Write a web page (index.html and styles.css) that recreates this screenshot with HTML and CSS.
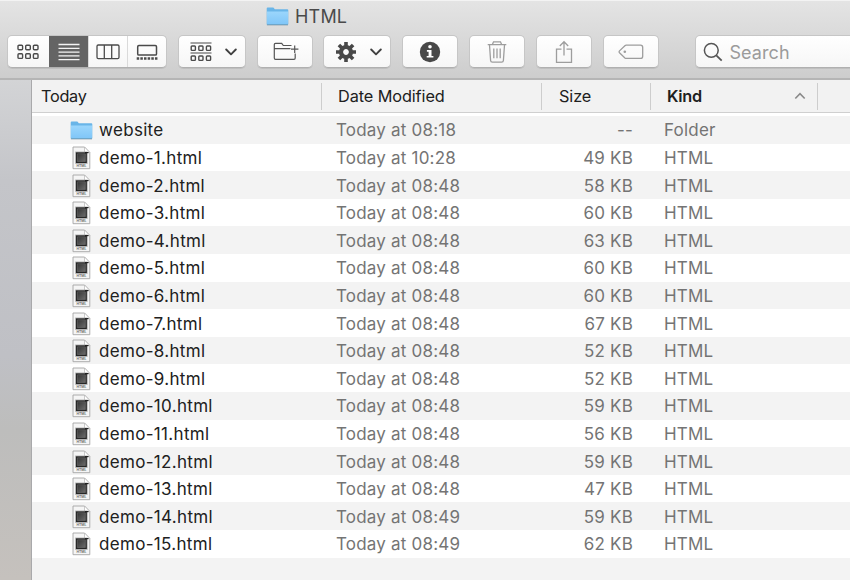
FILE: index.html
```html
<!DOCTYPE html>
<html lang="en">
<head>
<meta charset="utf-8">
<title>HTML</title>
<link rel="stylesheet" href="styles.css">
</head>
<body>
<svg class="defs" width="0" height="0" aria-hidden="true">
  <defs>
    <linearGradient id="blue" x1="0" y1="0" x2="0" y2="1"><stop offset="0" stop-color="#9bd6fc"/><stop offset="1" stop-color="#80c6f8"/></linearGradient>
    <linearGradient id="chip" x1="0" y1="0" x2="1" y2="1"><stop offset="0" stop-color="#343434"/><stop offset="1" stop-color="#6b6b6b"/></linearGradient>
    <symbol id="folder" viewBox="0 0 23 19">
      <path d="M.7 17V1.6Q.7.6 1.7.6H7q.8 0 1.2.8l.7.9h12.4q1 0 1 1V17q0 .9-1 .9H1.7Q.7 17.900.7 17Z" fill="#69b5e8"/>
      <path d="M1 4.500H22V16.300q0 .8-.8.8H1.800q-.8 0-.8-.8Z" fill="url(#blue)"/>
      <path d="M.9 17.900H22" stroke="#7795a8" stroke-width=".8"/>
    </symbol>
    <symbol id="file" viewBox="0 0 19 24">
      <path d="M1 1H12.500L17.800 6.500V22.700H1Z" fill="#f5f5f5" stroke="#a5a5a5" stroke-width=".9"/>
      <path d="M12.500 1V6.500H17.800Z" fill="#fff" stroke="#b5b5b5" stroke-width=".7"/>
      <path d="M3.200 5.600H15.600V17.800H3.200Z" fill="#a4a4a4"/>
      <path d="M4 6.400H14.800V17H4Z" fill="#242424"/>
      <path d="M5.400 7.800H13.400V15.600H5.400Z" fill="url(#chip)" stroke="#777" stroke-width=".5"/>
      <path d="M13 6H16.500V7.200H13Z" fill="#222"/>
      <text x="9.500" y="21.300" text-anchor="middle" class="tiny">HTML</text>
    </symbol>
    <symbol id="down" viewBox="0 0 12 8"><path d="M1.200 1.500 6 6.300 10.800 1.500" fill="none" stroke="#404040" stroke-width="1.900" stroke-linecap="round" stroke-linejoin="round"/></symbol>
  </defs>
</svg>
<div class="window">
  <header class="chrome">
    <div class="title"><svg width="23" height="19"><use href="#folder"/></svg><span>HTML</span></div>
    <div class="toolbar">
      <div class="group views">
        <button class="view"><svg width="22" height="16" viewBox="0 0 22 16" fill="none" stroke="#4a4a4a" stroke-width="1.400"><rect x="1" y="1.200" width="4.600" height="4.600" rx="1"/><rect x="8.700" y="1.200" width="4.600" height="4.600" rx="1"/><rect x="16.400" y="1.200" width="4.600" height="4.600" rx="1"/><rect x="1" y="9.800" width="4.600" height="4.600" rx="1"/><rect x="8.700" y="9.800" width="4.600" height="4.600" rx="1"/><rect x="16.400" y="9.800" width="4.600" height="4.600" rx="1"/></svg></button>
        <button class="view active"><svg width="22" height="18" viewBox="0 0 22 18" stroke="#f4f4f4" stroke-width="1.300"><path d="M.5 1.500H21.500M.5 5.300H21.500M.5 9.100H21.500M.5 12.900H21.500M.5 16.700H21.500"/></svg></button>
        <button class="view"><svg width="24" height="16" viewBox="0 0 24 16" fill="none" stroke="#4a4a4a" stroke-width="1.300"><rect x="1" y="1" width="22" height="13.600" rx="1.300"/><path d="M8.300 1V14.600M15.700 1V14.600"/></svg></button>
        <button class="view"><svg width="22" height="17" viewBox="0 0 22 17" fill="none" stroke="#4a4a4a"><rect x="1.700" y="1.500" width="18.800" height="9.600" rx="1.200" stroke-width="1.500"/><path d="M.7 14.400H21.500" stroke-width="2.500" stroke-dasharray="2.500 1.150"/></svg></button>
      </div>
      <button class="group arrange"><svg width="22" height="20" viewBox="0 0 22 20" fill="none" stroke="#4a4a4a" stroke-width="1.400"><path d="M.5 1H21.500M.5 11H21.500" stroke-width="1.100"/><rect x="1.200" y="4" width="4.200" height="4.400" rx=".8"/><rect x="8.800" y="4" width="4.200" height="4.400" rx=".8"/><rect x="16.400" y="4" width="4.200" height="4.400" rx=".8"/><rect x="1.200" y="14" width="4.200" height="4.400" rx=".8"/><rect x="8.800" y="14" width="4.200" height="4.400" rx=".8"/><rect x="16.400" y="14" width="4.200" height="4.400" rx=".8"/></svg><svg class="down" width="12" height="8"><use href="#down"/></svg></button>
      <button class="group newfolder"><svg width="26" height="20" viewBox="0 0 26 20" fill="none" stroke="#555" stroke-width="1.200"><path d="M18.500 3.500H10.300L8.700 1.300H2.500Q1.300 1.300 1.300 2.500V16Q1.300 17.300 2.500 17.300H21Q22.200 17.300 22.200 16V11.500M1.300 6.700H17.500M21.700 3.500V10.900M18 7.200H25.400"/></svg></button>
      <button class="group action"><svg width="22" height="22" viewBox="-11 -11 22 22"><g stroke="#484848" stroke-width="3.600"><path d="M0-10V-5M0 5V10M-10 0H-5M5 0H10M-7.100-7.100-4-4M4 4 7.100 7.100M-7.100 7.100-4 4M4-4 7.100-7.100"/></g><circle r="5" fill="none" stroke="#484848" stroke-width="4.200"/></svg><svg class="down" width="12" height="8"><use href="#down"/></svg></button>
      <button class="group info"><svg width="22" height="22" viewBox="0 0 22 22"><circle cx="11" cy="11" r="10.200" fill="#484848"/><circle cx="11" cy="5.800" r="1.800" fill="#fff"/><path d="M7.900 9H12.500V14.900H14.400V16.600H7.700V14.900H9.600V10.700H7.900Z" fill="#fff"/></svg></button>
      <button class="group trash"><svg width="20" height="24" viewBox="0 0 20 24" fill="none" stroke="#9d9d9d" stroke-width="1.300"><path d="M.7 4.600H19.300M5.500 4.200 6.500 1.800H13.500L14.500 4.200M2.500 5 3.600 20.500Q3.700 22.200 5.400 22.200H14.600Q16.300 22.200 16.400 20.500L17.500 5M6.800 8.500V18.300M10 8.500V18.300M13.200 8.500V18.300"/></svg></button>
      <button class="group share"><svg width="18" height="24" viewBox="0 0 18 24" fill="none" stroke="#9d9d9d" stroke-width="1.300"><path d="M6.500 9.200H1.500V22.300H16.500V9.200H11.500M9 15.500V2M4.800 6 9 1.700 13.200 6"/></svg></button>
      <button class="group tag"><svg width="26" height="16" viewBox="0 0 26 16" fill="none" stroke="#9d9d9d" stroke-width="1.300"><path d="M8.200 1.200H22.500Q24.700 1.200 24.700 3.400V12.200Q24.700 14.400 22.500 14.400H8.200Q7.500 14.400 6.900 13.900L1.500 8.700Q.7 7.800 1.500 6.900L6.900 1.700Q7.500 1.200 8.200 1.200Z"/><circle cx="6.800" cy="7.800" r="1.300" fill="#9d9d9d" stroke="none"/></svg></button>
      <div class="group search"><svg width="20" height="20" viewBox="0 0 20 20" fill="none" stroke="#555" stroke-width="1.500"><circle cx="8.300" cy="8.300" r="6.900"/><path d="M13.300 13.300 18.700 18.700" stroke-width="1.800"/></svg><span>Search</span></div>
    </div>
  </header>
  <div class="body">
    <aside class="sidebar"></aside>
    <main class="list">
      <div class="row head"><span class="c1">Today</span><span class="c2">Date Modified</span><span class="c3">Size</span><span class="c4">Kind<svg width="12" height="8" viewBox="0 0 12 8"><path d="M1.300 6.500 6 1.700 10.700 6.500" fill="none" stroke="#8a8a8a" stroke-width="1.600"/></svg></span><span class="c5"></span></div>
      <div class="rows">
        <div class="row"><span class="name"><svg class="dir" width="23" height="19"><use href="#folder"/></svg>website</span><span class="date">Today at 08:18</span><span class="size none">--</span><span class="kind folder">Folder</span></div>
        <div class="row"><span class="name"><svg width="19" height="24"><use href="#file"/></svg>demo-1.html</span><span class="date">Today at 10:28</span><span class="size">49 KB</span><span class="kind">HTML</span></div>
        <div class="row"><span class="name"><svg width="19" height="24"><use href="#file"/></svg>demo-2.html</span><span class="date">Today at 08:48</span><span class="size">58 KB</span><span class="kind">HTML</span></div>
        <div class="row"><span class="name"><svg width="19" height="24"><use href="#file"/></svg>demo-3.html</span><span class="date">Today at 08:48</span><span class="size">60 KB</span><span class="kind">HTML</span></div>
        <div class="row"><span class="name"><svg width="19" height="24"><use href="#file"/></svg>demo-4.html</span><span class="date">Today at 08:48</span><span class="size">63 KB</span><span class="kind">HTML</span></div>
        <div class="row"><span class="name"><svg width="19" height="24"><use href="#file"/></svg>demo-5.html</span><span class="date">Today at 08:48</span><span class="size">60 KB</span><span class="kind">HTML</span></div>
        <div class="row"><span class="name"><svg width="19" height="24"><use href="#file"/></svg>demo-6.html</span><span class="date">Today at 08:48</span><span class="size">60 KB</span><span class="kind">HTML</span></div>
        <div class="row"><span class="name"><svg width="19" height="24"><use href="#file"/></svg>demo-7.html</span><span class="date">Today at 08:48</span><span class="size">67 KB</span><span class="kind">HTML</span></div>
        <div class="row"><span class="name"><svg width="19" height="24"><use href="#file"/></svg>demo-8.html</span><span class="date">Today at 08:48</span><span class="size">52 KB</span><span class="kind">HTML</span></div>
        <div class="row"><span class="name"><svg width="19" height="24"><use href="#file"/></svg>demo-9.html</span><span class="date">Today at 08:48</span><span class="size">52 KB</span><span class="kind">HTML</span></div>
        <div class="row"><span class="name"><svg width="19" height="24"><use href="#file"/></svg>demo-10.html</span><span class="date">Today at 08:48</span><span class="size">59 KB</span><span class="kind">HTML</span></div>
        <div class="row"><span class="name"><svg width="19" height="24"><use href="#file"/></svg>demo-11.html</span><span class="date">Today at 08:48</span><span class="size">56 KB</span><span class="kind">HTML</span></div>
        <div class="row"><span class="name"><svg width="19" height="24"><use href="#file"/></svg>demo-12.html</span><span class="date">Today at 08:48</span><span class="size">59 KB</span><span class="kind">HTML</span></div>
        <div class="row"><span class="name"><svg width="19" height="24"><use href="#file"/></svg>demo-13.html</span><span class="date">Today at 08:48</span><span class="size">47 KB</span><span class="kind">HTML</span></div>
        <div class="row"><span class="name"><svg width="19" height="24"><use href="#file"/></svg>demo-14.html</span><span class="date">Today at 08:49</span><span class="size">59 KB</span><span class="kind">HTML</span></div>
        <div class="row"><span class="name"><svg width="19" height="24"><use href="#file"/></svg>demo-15.html</span><span class="date">Today at 08:49</span><span class="size">62 KB</span><span class="kind">HTML</span></div>
        <div class="row"></div>
      </div>
    </main>
  </div>
</div>
</body>
</html>
```
FILE: styles.css
```css
* { box-sizing: border-box; }
body { margin: 0; background: #fff; font-family: Inter, "Liberation Sans", sans-serif; font-size: 16.5px; }
svg { display: block; flex: none; }
.defs { position: absolute; }
.tiny { font-size: 3.5px; letter-spacing: 0; font-weight: 600; fill: #666; }
.window { width: 850px; height: 580px; overflow: hidden; display: flex; flex-direction: column; }
.chrome { height: 80px; flex: none; background: linear-gradient(#e4e4e4, #cdcdcd); border-top: 1px solid #f3f3f3; border-bottom: 2px solid #b5b5b5; }
.title { height: 34px; display: flex; align-items: center; gap: 6px; padding: 0 0 3px 266px; color: #4a4a4a; font-size: 18px; letter-spacing: .2px; }
.toolbar { display: flex; padding-left: 6.5px; gap: 10.8px; }
.group { height: 33px; flex: none; border: 1px solid #c6c6c6; border-bottom-color: #b0b0b0; border-radius: 5px; background: linear-gradient(#fff, #f6f6f6); display: flex; align-items: center; justify-content: center; padding: 1px 0 0; box-shadow: 0 1px 0 rgba(0,0,0,.08); }
.views { width: 160.500px; justify-content: flex-start; overflow: hidden; padding-top: 0; }
.view { height: 33px; width: 39px; padding: 1px 0 0; border: 0; border-left: 1px solid #dadada; background: none; display: flex; align-items: center; justify-content: center; }
.view:first-child { width: 42px; border: 0; }
.view.active { background: #646464; border: 0; }
.arrange { width: 68px; gap: 13px; padding-left: 4px; }
.newfolder, .info, .trash, .share, .tag { width: 56px; }
.action { width: 68px; gap: 13px; padding-left: 3px; }
.newfolder { padding-left: 2px; }
.search { width: 170px; margin-left: 25.500px; justify-content: flex-start; padding-left: 7px; gap: 6.5px; color: #9b9b9b; font-size: 18px; letter-spacing: .1px; }
.body { display: flex; flex: 1; min-height: 0; }
.sidebar { width: 32px; flex: none; border-right: 1px solid #a9a9ab; background: linear-gradient(#d3d4d6 0, #c4c5c9 20%, #bfc0c5 55%, #bdbdbc 70%, #c5c1bd 100%); }
.list { flex: 1; min-width: 0; }
.row { display: flex; align-items: center; white-space: nowrap; }
.head { height: 33px; background: #f2f2f2; border-bottom: 1px solid #cfcfcf; color: #202020; font-size: 16.300px; letter-spacing: -.1px; }
.head span { height: 27px; display: flex; align-items: center; padding-left: 17px; border-left: 1px solid #cdcdcd; }
.head .c1 { width: 289px; padding-left: 9px; border: 0; letter-spacing: -.3px; }
.head .c2 { width: 220px; padding-left: 16px; }
.head .c3 { width: 109px; }
.head .c4 { width: 167px; padding: 0 11px 0 16px; justify-content: space-between; font-weight: 600; letter-spacing: -.3px; }
.rows { padding-top: 3px; font-size: 17px; letter-spacing: .2px; }
.rows .row { height: 27.6px; padding-top: 1.3px; color: #747474; }
.rows .row:nth-child(odd) { background: #f3f3f3; }
.name { width: 304px; padding-left: 40px; display: flex; align-items: center; gap: 8px; color: #202020; letter-spacing: .32px; }
.name .dir { margin: 0 -2px; }
.date { width: 180px; }
.size { width: 117px; text-align: right; }
.kind { padding-left: 31px; }
```
